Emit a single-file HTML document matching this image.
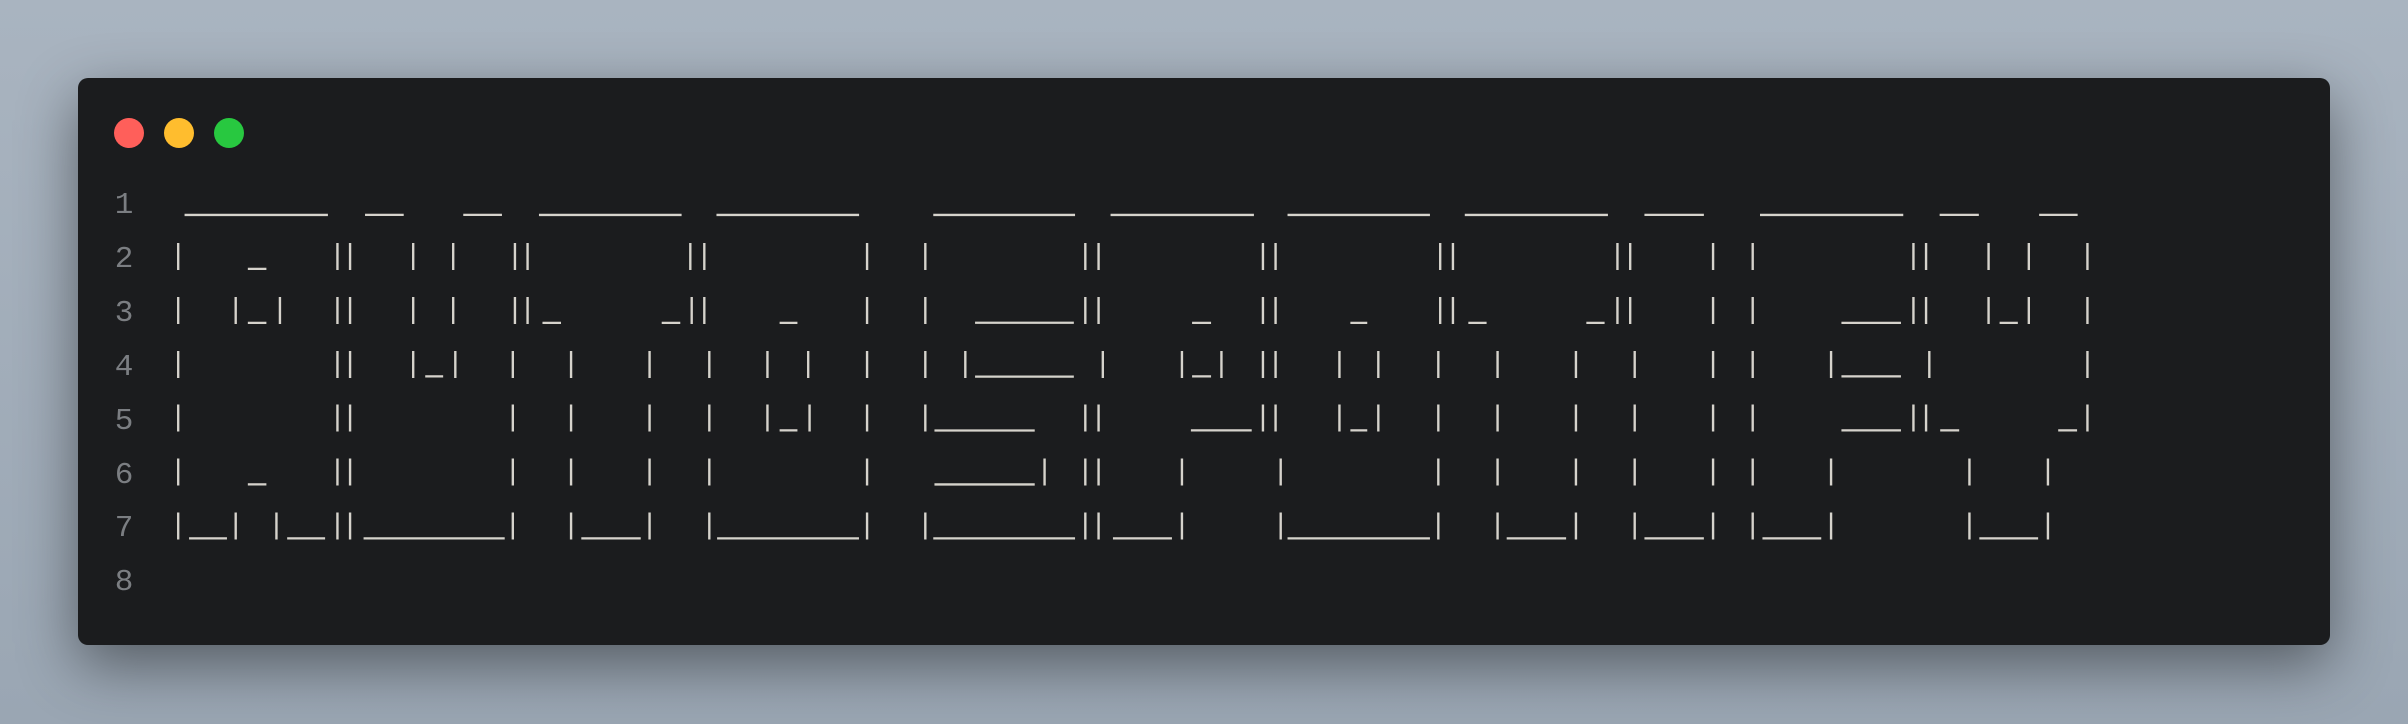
<!DOCTYPE html>
<html><head><meta charset="utf-8"><style>
html,body{margin:0;padding:0;width:2408px;height:724px;overflow:hidden;background:linear-gradient(180deg,#a9b4c0 0%,#9aa6b3 100%);}
.win{position:absolute;left:78px;top:78px;width:2252px;height:567px;background:#1b1c1e;border-radius:10px;box-shadow:0 20px 60px rgba(0,0,0,0.45);}
svg{position:absolute;left:0;top:0;}
.b{font-family:"Liberation Mono",monospace;font-size:29px;fill:#d6d3cc;text-anchor:middle;}
.u{font-family:"Liberation Mono",monospace;font-size:29px;fill:#d6d3cc;stroke:#d6d3cc;stroke-width:0.9;}
.n{font-family:"Liberation Mono",monospace;font-size:31px;fill:#7b7e82;text-anchor:middle;}
</style></head><body>
<div class="win"></div>
<svg width="2408" height="724" xmlns="http://www.w3.org/2000/svg">
<circle cx="129" cy="133" r="15" fill="#ff5f5a"/>
<circle cx="179" cy="133" r="15" fill="#ffbd2e"/>
<circle cx="229" cy="133" r="15" fill="#28c840"/>
<g class="n">
<text x="124" y="213">1</text><text x="124" y="267">2</text><text x="124" y="321">3</text><text x="124" y="375">4</text><text x="124" y="429">5</text><text x="124" y="483">6</text><text x="124" y="536">7</text><text x="124" y="590">8</text>
</g>
<g class="u">
<!-- row1 -->
<text x="188.7" y="212.5" textLength="135.4" lengthAdjust="spacingAndGlyphs">_</text>
<text x="366.2" y="212.5" textLength="36.5" lengthAdjust="spacingAndGlyphs">_</text>
<text x="464.4" y="212.5" textLength="36.5" lengthAdjust="spacingAndGlyphs">_</text>
<text x="543" y="212.5" textLength="134.7" lengthAdjust="spacingAndGlyphs">_</text>
<text x="720.5" y="212.5" textLength="134.7" lengthAdjust="spacingAndGlyphs">_</text>
<text x="937.3" y="212.5" textLength="133.9" lengthAdjust="spacingAndGlyphs">_</text>
<text x="1114.7" y="212.5" textLength="135.4" lengthAdjust="spacingAndGlyphs">_</text>
<text x="1291.6" y="212.5" textLength="134.5" lengthAdjust="spacingAndGlyphs">_</text>
<text x="1468.9" y="212.5" textLength="135.2" lengthAdjust="spacingAndGlyphs">_</text>
<text x="1646.2" y="212.5" textLength="56.1" lengthAdjust="spacingAndGlyphs">_</text>
<text x="1764.1" y="212.5" textLength="135.3" lengthAdjust="spacingAndGlyphs">_</text>
<text x="1940.8" y="212.5" textLength="37" lengthAdjust="spacingAndGlyphs">_</text>
<text x="2040.3" y="212.5" textLength="36.3" lengthAdjust="spacingAndGlyphs">_</text>
<!-- row2 -->
<text x="248.4" y="266.4" textLength="17.5" lengthAdjust="spacingAndGlyphs">_</text>
<!-- row3 -->
<text x="248.4" y="320.3" textLength="17.5" lengthAdjust="spacingAndGlyphs">_</text>
<text x="543" y="320.3" textLength="17.5" lengthAdjust="spacingAndGlyphs">_</text>
<text x="662.3" y="320.3" textLength="17.5" lengthAdjust="spacingAndGlyphs">_</text>
<text x="780.1" y="320.3" textLength="16.8" lengthAdjust="spacingAndGlyphs">_</text>
<text x="977.9" y="320.3" textLength="93.3" lengthAdjust="spacingAndGlyphs">_</text>
<text x="1192.7" y="320.3" textLength="17.9" lengthAdjust="spacingAndGlyphs">_</text>
<text x="1350.9" y="320.3" textLength="15.9" lengthAdjust="spacingAndGlyphs">_</text>
<text x="1468.9" y="320.3" textLength="17.2" lengthAdjust="spacingAndGlyphs">_</text>
<text x="1586.9" y="320.3" textLength="17.2" lengthAdjust="spacingAndGlyphs">_</text>
<text x="1843.2" y="320.3" textLength="56.2" lengthAdjust="spacingAndGlyphs">_</text>
<text x="2000.1" y="320.3" textLength="17.2" lengthAdjust="spacingAndGlyphs">_</text>
<!-- row4 -->
<text x="425.8" y="374.2" textLength="16.9" lengthAdjust="spacingAndGlyphs">_</text>
<text x="977.9" y="374.2" textLength="93.3" lengthAdjust="spacingAndGlyphs">_</text>
<text x="1192.7" y="374.2" textLength="17.9" lengthAdjust="spacingAndGlyphs">_</text>
<text x="1843.2" y="374.2" textLength="56.2" lengthAdjust="spacingAndGlyphs">_</text>
<!-- row5 -->
<text x="780.1" y="428.1" textLength="16.8" lengthAdjust="spacingAndGlyphs">_</text>
<text x="937.3" y="428.1" textLength="94.7" lengthAdjust="spacingAndGlyphs">_</text>
<text x="1192.7" y="428.1" textLength="57.4" lengthAdjust="spacingAndGlyphs">_</text>
<text x="1350.9" y="428.1" textLength="15.9" lengthAdjust="spacingAndGlyphs">_</text>
<text x="1843.2" y="428.1" textLength="56.2" lengthAdjust="spacingAndGlyphs">_</text>
<text x="1940.8" y="428.1" textLength="17.9" lengthAdjust="spacingAndGlyphs">_</text>
<text x="2058.8" y="428.1" textLength="17.8" lengthAdjust="spacingAndGlyphs">_</text>
<!-- row6 -->
<text x="248.4" y="482" textLength="17.5" lengthAdjust="spacingAndGlyphs">_</text>
<text x="937.3" y="482" textLength="94.7" lengthAdjust="spacingAndGlyphs">_</text>
<!-- row7 -->
<text x="190.1" y="535.9" textLength="35.8" lengthAdjust="spacingAndGlyphs">_</text>
<text x="288.3" y="535.9" textLength="35.8" lengthAdjust="spacingAndGlyphs">_</text>
<text x="367.6" y="535.9" textLength="133.3" lengthAdjust="spacingAndGlyphs">_</text>
<text x="583" y="535.9" textLength="56.1" lengthAdjust="spacingAndGlyphs">_</text>
<text x="721.2" y="535.9" textLength="134" lengthAdjust="spacingAndGlyphs">_</text>
<text x="937.3" y="535.9" textLength="133.9" lengthAdjust="spacingAndGlyphs">_</text>
<text x="1114.7" y="535.9" textLength="55.7" lengthAdjust="spacingAndGlyphs">_</text>
<text x="1291.6" y="535.9" textLength="134.5" lengthAdjust="spacingAndGlyphs">_</text>
<text x="1508.4" y="535.9" textLength="56.1" lengthAdjust="spacingAndGlyphs">_</text>
<text x="1646.2" y="535.9" textLength="56.1" lengthAdjust="spacingAndGlyphs">_</text>
<text x="1764.1" y="535.9" textLength="55.5" lengthAdjust="spacingAndGlyphs">_</text>
<text x="1981" y="535.9" textLength="55.5" lengthAdjust="spacingAndGlyphs">_</text>
</g>
<g class="b">
<text y="264" x="178.2 337.5 350.1 413.2 453.2 514.9 527.6 690.3 704.3 867.1 925.3 1085.3 1098.6 1262.9 1275.6 1440.2 1452.9 1617.5 1630.2 1713.1 1752.7 1913.4 1926.1 1988.6 2028.8 2087.5">||||||||||||||||||||||||||</text>
<text y="317.9" x="178.2 235.7 279.9 337.5 350.1 413.2 453.2 514.9 527.6 691.7 704.3 867.1 925.3 1085.3 1098.6 1262.9 1275.6 1440.2 1452.9 1617.5 1630.2 1713.1 1752.7 1913.4 1926.1 1988.6 2028.8 2087.5">||||||||||||||||||||||||||||</text>
<text y="371.8" x="178.2 337.5 350.1 413.2 455.3 512.8 571.1 649.6 709.3 767.5 808.2 867.1 925.3 965.3 1102.8 1181.9 1221.4 1262.9 1275.6 1339.4 1378.3 1438.3 1497.6 1576 1634.7 1713.1 1752.7 1831.1 1929.3 2087.5">||||||||||||||||||||||||||||||</text>
<text y="425.7" x="178.2 337.5 350.1 512.8 571.1 649.6 709.3 767.5 809.6 867.1 925.3 1085.3 1098.6 1262.9 1275.6 1339.4 1378.3 1438.3 1497.6 1576 1634.7 1713.1 1752.7 1913.4 1926.1 2087.5">||||||||||||||||||||||||||</text>
<text y="479.6" x="178.2 337.5 350.1 512.8 571.1 649.6 709.3 867.1 1044.6 1085.3 1098.6 1181.9 1280.7 1438.3 1497.6 1576 1634.7 1713.1 1752.7 1831.1 1969.5 2047.9">||||||||||||||||||||||</text>
<text y="533.5" x="178.2 235.7 276.4 337.5 350.1 512.8 571.1 649.6 709.3 867.1 925.3 1085.3 1098.6 1181.9 1280.7 1438.3 1497.6 1576 1634.7 1713.1 1752.7 1831.1 1969.5 2047.9">||||||||||||||||||||||||</text>
</g>
</svg>
</body></html>
